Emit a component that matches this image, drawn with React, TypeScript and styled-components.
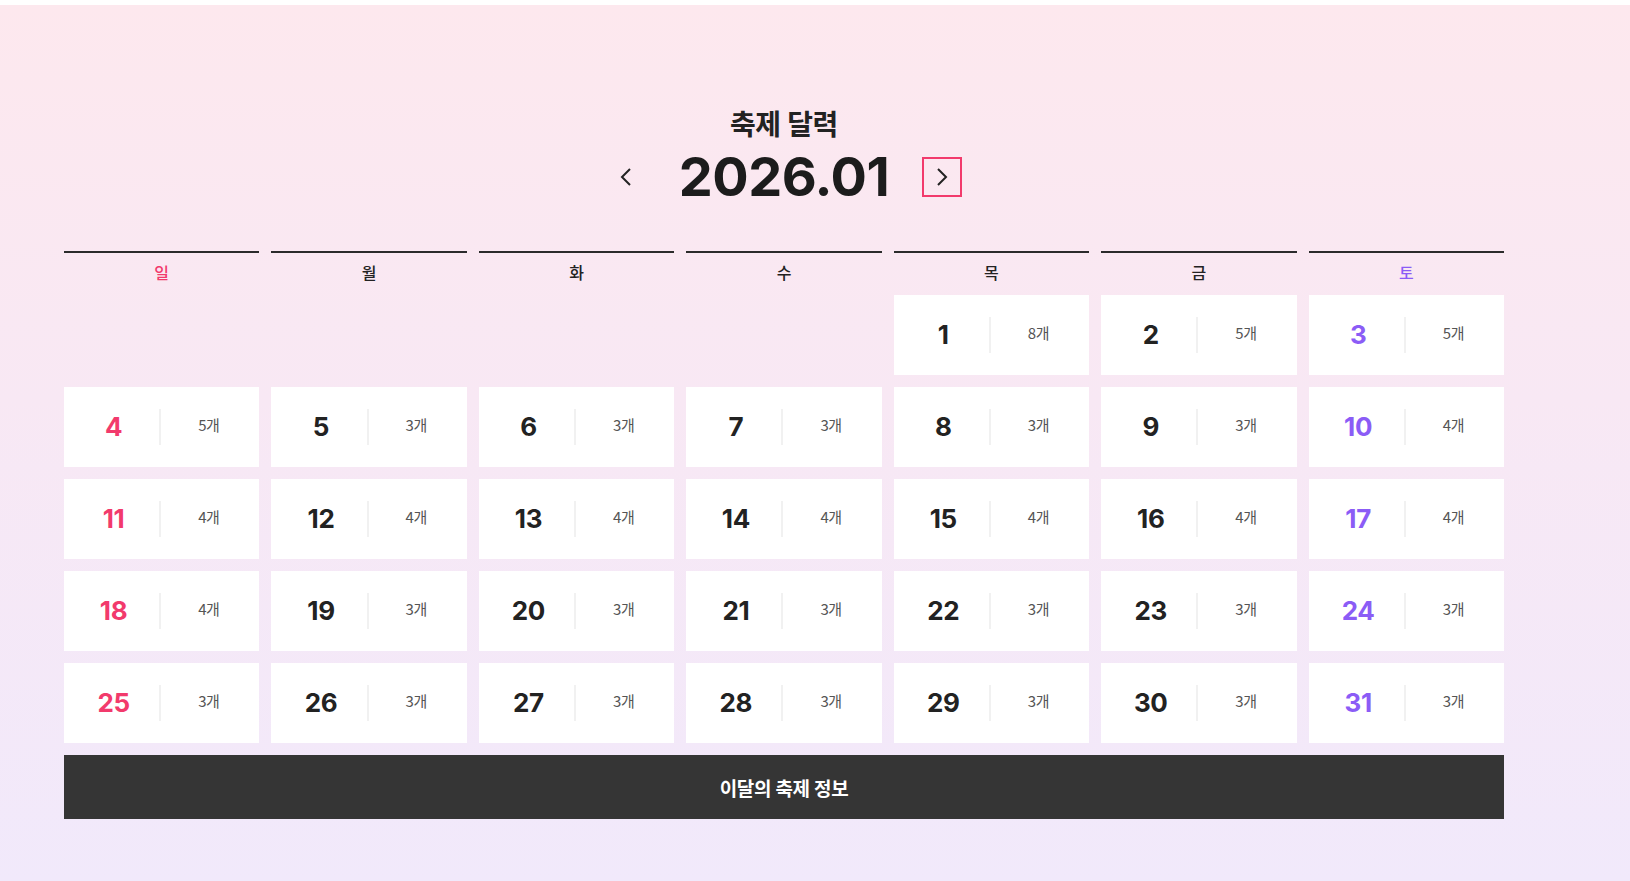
import React from "react";
import styled, { createGlobalStyle } from "styled-components";

const GlobalStyle = createGlobalStyle`
  * { box-sizing: border-box; }
  html, body { margin: 0; padding: 0; }
  body {
    font-family: "Inter", "Noto Sans CJK KR", "Noto Sans", sans-serif;
    color: #222;
    background: #ffffff;
  }
  button { font-family: inherit; }
`;

const Page = styled.div`
  min-height: 100vh;
  padding-top: 5px;
  background: #ffffff;
`;

const Main = styled.main`
  min-height: 876px;
  background: linear-gradient(180deg, #fde8ee 0%, #f8e8f4 45%, #f1e9fb 100%);
  padding: 103px 0 62px 64px;
`;

const Container = styled.section`
  width: 1440px;
  display: flex;
  flex-direction: column;
`;

const Title = styled.h2`
  margin: 0;
  text-align: center;
  font-size: 28px;
  line-height: 34px;
  font-weight: 700;
  color: #222;
  letter-spacing: -0.3px;
`;

const YearRow = styled.div`
  margin-top: 8px;
  display: flex;
  justify-content: center;
  align-items: center;
  gap: 33px;
`;

const NavButton = styled.button<{ $active?: boolean }>`
  width: 40px;
  height: 40px;
  padding: 0;
  display: flex;
  align-items: center;
  justify-content: center;
  background: transparent;
  border: 2px solid ${(p) => (p.$active ? "#f23a6c" : "transparent")};
  color: #222;
  cursor: pointer;
`;

const YearText = styled.div`
  font-size: 54px;
  line-height: 1;
  font-weight: 700;
  color: #1c1c1c;
  letter-spacing: -0.5px;
`;

const Grid = styled.div`
  margin-top: 47px;
  display: grid;
  grid-template-columns: repeat(7, 1fr);
  column-gap: 12px;
  row-gap: 12px;
`;

type Tone = "sun" | "sat" | "normal";

const toneColor = (t: Tone) =>
  t === "sun" ? "#f23a6c" : t === "sat" ? "#8b5cf6" : "#222";

const DayHead = styled.div<{ $tone: Tone }>`
  height: 32px;
  border-top: 2px solid #2b2b2b;
  padding-top: 11px;
  text-align: center;
  font-size: 16px;
  line-height: 18px;
  font-weight: 500;
  color: ${(p) => toneColor(p.$tone)};
`;

const EmptyCell = styled.div`
  height: 80px;
`;

const Cell = styled.div`
  height: 80px;
  background: #ffffff;
  display: grid;
  grid-template-columns: 95fr 2fr 98fr;
  align-items: center;
`;

const DateNum = styled.span<{ $tone: Tone }>`
  text-align: center;
  padding-left: 4px;
  font-size: 26px;
  font-weight: 700;
  line-height: 1;
  color: ${(p) => toneColor(p.$tone)};
  letter-spacing: -0.3px;
`;

const Divider = styled.span`
  width: 2px;
  height: 36px;
  background: #f1f1f1;
`;

const Count = styled.span`
  text-align: center;
  font-family: "Noto Sans CJK KR", "Noto Sans", sans-serif;
  font-size: 15px;
  line-height: 20px;
  font-weight: 400;
  color: #555;
  letter-spacing: -0.4px;
  padding: 0 3px 4px 0;
`;

const InfoBar = styled.button`
  margin-top: 12px;
  height: 64px;
  width: 100%;
  border: none;
  background: #353535;
  color: #ffffff;
  font-size: 19px;
  font-weight: 700;
  letter-spacing: -0.3px;
  cursor: pointer;
`;

const Chevron = ({ dir }: { dir: "left" | "right" }) => (
  <svg width="14" height="20" viewBox="0 0 14 20" fill="none">
    <path
      d={dir === "left" ? "M11 2 L3 10 L11 18" : "M3 2 L11 10 L3 18"}
      stroke="#222"
      strokeWidth="2"
      strokeLinecap="butt"
      strokeLinejoin="miter"
    />
  </svg>
);

const DAYS: { label: string; tone: Tone }[] = [
  { label: "일", tone: "sun" },
  { label: "월", tone: "normal" },
  { label: "화", tone: "normal" },
  { label: "수", tone: "normal" },
  { label: "목", tone: "normal" },
  { label: "금", tone: "normal" },
  { label: "토", tone: "sat" },
];

const COUNTS: Record<number, number> = {
  1: 8, 2: 5, 3: 5,
  4: 5, 5: 3, 6: 3, 7: 3, 8: 3, 9: 3, 10: 4,
  11: 4, 12: 4, 13: 4, 14: 4, 15: 4, 16: 4, 17: 4,
  18: 4, 19: 3, 20: 3, 21: 3, 22: 3, 23: 3, 24: 3,
  25: 3, 26: 3, 27: 3, 28: 3, 29: 3, 30: 3, 31: 3,
};

const OFFSET = 4;

export default function App() {
  const cells: React.ReactNode[] = [];
  for (let i = 0; i < OFFSET; i++) cells.push(<EmptyCell key={`e${i}`} />);
  for (let d = 1; d <= 31; d++) {
    const col = (OFFSET + d - 1) % 7;
    const tone: Tone = col === 0 ? "sun" : col === 6 ? "sat" : "normal";
    cells.push(
      <Cell key={d}>
        <DateNum $tone={tone}>{d}</DateNum>
        <Divider />
        <Count>{COUNTS[d]}개</Count>
      </Cell>
    );
  }

  return (
    <>
      <GlobalStyle />
      <Page>
        <Main>
          <Container>
            <Title>축제 달력</Title>
            <YearRow>
              <NavButton aria-label="이전 달">
                <Chevron dir="left" />
              </NavButton>
              <YearText>2026.01</YearText>
              <NavButton $active aria-label="다음 달">
                <Chevron dir="right" />
              </NavButton>
            </YearRow>
            <Grid>
              {DAYS.map((d) => (
                <DayHead key={d.label} $tone={d.tone}>
                  {d.label}
                </DayHead>
              ))}
              {cells}
            </Grid>
            <InfoBar>이달의 축제 정보</InfoBar>
          </Container>
        </Main>
      </Page>
    </>
  );
}
